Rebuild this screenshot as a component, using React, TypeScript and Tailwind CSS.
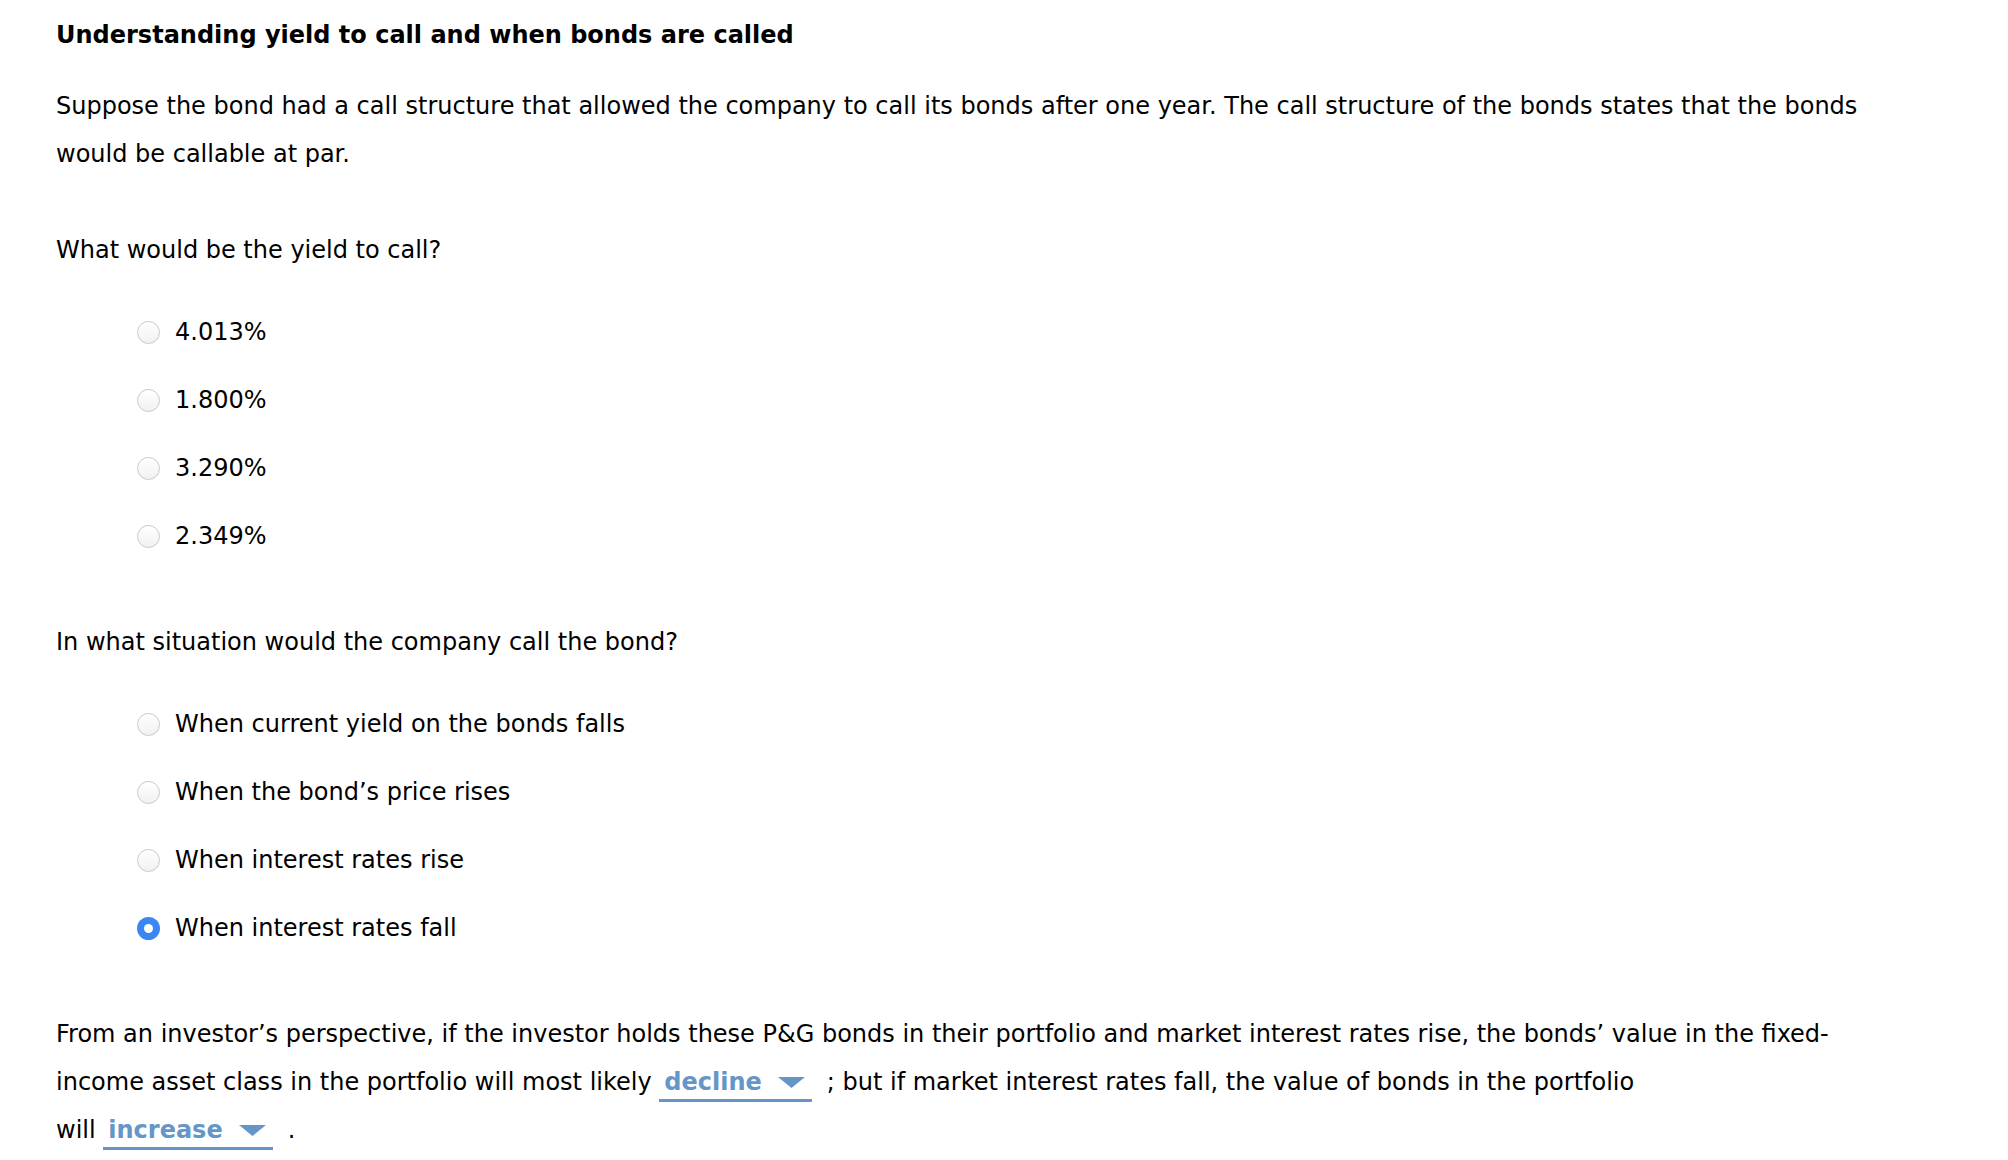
import React from "react";

const yieldOptions = ["4.013%", "1.800%", "3.290%", "2.349%"];
const callOptions = [
  "When current yield on the bonds falls",
  "When the bond\u2019s price rises",
  "When interest rates rise",
  "When interest rates fall",
];

function Radio({ checked }: { checked?: boolean }) {
  if (checked) {
    return (
      <span className="flex h-[23px] w-[23px] shrink-0 items-center justify-center rounded-full bg-[#3a86f4]">
        <span className="h-[9px] w-[9px] rounded-full bg-white" />
      </span>
    );
  }
  return (
    <span className="h-[23px] w-[23px] shrink-0 rounded-full border border-[#c9c9c9] bg-gradient-to-b from-white to-[#f1f1f1]" />
  );
}

function OptionList({ items, selected }: { items: string[]; selected?: number }) {
  return (
    <div className="mb-[48px] pl-[81px]">
      {items.map((item, i) => (
        <label key={item} className="flex h-[68px] items-center gap-[15px]">
          <Radio checked={i === selected} />
          <span>{item}</span>
        </label>
      ))}
    </div>
  );
}

function Dropdown({ value }: { value: string }) {
  return (
    <span className="mr-[15px] inline-block border-b-[3px] border-[#6596c8] pl-[5px] pr-[7px] leading-[34px] font-bold text-[#6596c8]">
      {value}
      <svg width="27" height="11" viewBox="0 0 27 11" className="ml-[16px] inline-block align-[2px]">
        <path d="M0 0 H27 L13.5 11 Z" fill="#6596c8" />
      </svg>
    </span>
  );
}

export default function App() {
  return (
    <div className="min-h-screen bg-white px-[56px] pt-[11px] font-['DejaVu_Sans','Verdana',sans-serif] text-[24px] leading-[48px] text-black">
      <h1 className="mb-[23px] font-bold">
        Understanding yield to call and when bonds are called
      </h1>

      <p className="mb-[48px]">
        Suppose the bond had a call structure that allowed the company to call its bonds after one year. The call
        structure of the bonds states that the bonds
        <br />
        would be callable at par.
      </p>

      <p className="mb-[24px]">What would be the yield to call?</p>
      <OptionList items={yieldOptions} />

      <p className="mb-[24px]">In what situation would the company call the bond?</p>
      <OptionList items={callOptions} selected={3} />

      <p>
        From an investor&rsquo;s perspective, if the investor holds these P&amp;G bonds in their portfolio and market
        interest rates rise, the bonds&rsquo; value in the fixed-
        <br />
        income asset class in the portfolio will most likely <Dropdown value="decline" />; but if market interest rates
        fall, the value of bonds in the portfolio
        <br />
        will <Dropdown value="increase" />.
      </p>
    </div>
  );
}
